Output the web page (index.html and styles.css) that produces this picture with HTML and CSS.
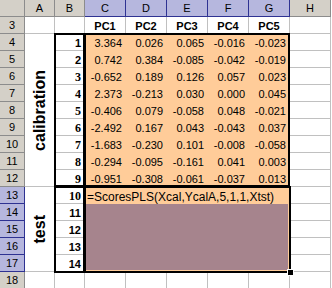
FILE: index.html
```html
<!DOCTYPE html>
<html>
<head>
<meta charset="utf-8">
<link rel="stylesheet" href="styles.css">
</head>
<body>
<div class="wrap">
<div class="sheet">
  <!-- column headers -->
  <div class="hd corner"></div>
  <div class="hd">A</div>
  <div class="hd">B</div>
  <div class="hd hl">C</div>
  <div class="hd hl">D</div>
  <div class="hd hl">E</div>
  <div class="hd hl">F</div>
  <div class="hd hl">G</div>
  <div class="hd">H</div>

  <!-- row 3 -->
  <div class="hd rh">3</div>
  <div class="c"></div>
  <div class="c"></div>
  <div class="c pc">PC1</div>
  <div class="c pc">PC2</div>
  <div class="c pc">PC3</div>
  <div class="c pc">PC4</div>
  <div class="c pc">PC5</div>
  <div class="c"></div>

  <div class="merge m-cal"><span class="vt">calibration</span></div>
  <div class="merge m-test"><span class="vt">test</span></div>
  <div class="formula">=ScoresPLS(Xcal,YcalA,5,1,1,Xtst)</div>
  <div class="selfill"></div>

  <!-- row 4 -->
  <div class="hd rh">4</div>
  <div class="c id">1</div>
  <div class="c n o">3.364</div><div class="c n o">0.026</div><div class="c n o">0.065</div><div class="c n o">-0.016</div><div class="c n o">-0.023</div>
  <div class="c"></div>
  <!-- row 5 -->
  <div class="hd rh">5</div>
  <div class="c id">2</div>
  <div class="c n o">0.742</div><div class="c n o">0.384</div><div class="c n o">-0.085</div><div class="c n o">-0.042</div><div class="c n o">-0.019</div>
  <div class="c"></div>
  <!-- row 6 -->
  <div class="hd rh">6</div>
  <div class="c id sf">3</div>
  <div class="c n o">-0.652</div><div class="c n o">0.189</div><div class="c n o">0.126</div><div class="c n o">0.057</div><div class="c n o">0.023</div>
  <div class="c"></div>
  <!-- row 7 -->
  <div class="hd rh">7</div>
  <div class="c id sf">4</div>
  <div class="c n o">2.373</div><div class="c n o">-0.213</div><div class="c n o">0.030</div><div class="c n o">0.000</div><div class="c n o">0.045</div>
  <div class="c"></div>
  <!-- row 8 -->
  <div class="hd rh">8</div>
  <div class="c id sf">5</div>
  <div class="c n o">-0.406</div><div class="c n o">0.079</div><div class="c n o">-0.058</div><div class="c n o">0.048</div><div class="c n o">-0.021</div>
  <div class="c"></div>
  <!-- row 9 -->
  <div class="hd rh">9</div>
  <div class="c id sf">6</div>
  <div class="c n o">-2.492</div><div class="c n o">0.167</div><div class="c n o">0.043</div><div class="c n o">-0.043</div><div class="c n o">0.037</div>
  <div class="c"></div>
  <!-- row 10 -->
  <div class="hd rh">10</div>
  <div class="c id sf">7</div>
  <div class="c n o">-1.683</div><div class="c n o">-0.230</div><div class="c n o">0.101</div><div class="c n o">-0.008</div><div class="c n o">-0.058</div>
  <div class="c"></div>
  <!-- row 11 -->
  <div class="hd rh">11</div>
  <div class="c id sf">8</div>
  <div class="c n o">-0.294</div><div class="c n o">-0.095</div><div class="c n o">-0.161</div><div class="c n o">0.041</div><div class="c n o">0.003</div>
  <div class="c"></div>
  <!-- row 12 -->
  <div class="hd rh">12</div>
  <div class="c id sf">9</div>
  <div class="c n o">-0.951</div><div class="c n o">-0.308</div><div class="c n o">-0.061</div><div class="c n o">-0.037</div><div class="c n o">0.013</div>
  <div class="c"></div>
  <!-- row 13 -->
  <div class="hd rh hl">13</div>
  <div class="c id sf">10</div>
  <div class="c"></div>
  <!-- row 14 -->
  <div class="hd rh hl">14</div>
  <div class="c id">11</div>
  <div class="c"></div>
  <!-- row 15 -->
  <div class="hd rh hl">15</div>
  <div class="c id">12</div>
  <div class="c"></div>
  <!-- row 16 -->
  <div class="hd rh hl">16</div>
  <div class="c id">13</div>
  <div class="c"></div>
  <!-- row 17 -->
  <div class="hd rh hl">17</div>
  <div class="c id">14</div>
  <div class="c"></div>
  <!-- row 18 -->
  <div class="hd rh">18</div>
  <div class="c"></div><div class="c"></div><div class="c"></div><div class="c"></div><div class="c"></div><div class="c"></div><div class="c"></div><div class="c"></div>
</div>

<div class="overlay">
  <div class="box box-b1"></div>
  <div class="box box-b2"></div>
  <div class="box box-data"></div>
  <div class="box box-sel"><span class="handle"></span></div>
</div>
</div>
</body>
</html>
```

FILE: styles.css
```css
html, body {
  margin: 0;
  padding: 0;
  background: #ffffff;
}

.wrap {
  display: grid;
  height: 288px;
  overflow: hidden;
}

.sheet,
.overlay {
  grid-area: 1 / 1;
  display: grid;
  grid-template-columns: 25px 30px 30px repeat(6, 41px);
  grid-template-rows: repeat(17, 17px);
  align-self: start;
}

.sheet {
  font-family: "Liberation Sans", Arial, sans-serif;
  font-size: 11px;
  color: #000;
}

.overlay {
  pointer-events: none;
  z-index: 2;
}

.sheet > div {
  box-sizing: border-box;
}

.hd {
  background: #d4d0c8;
  border-right: 1px solid #8c8c8c;
  border-bottom: 1px solid #8c8c8c;
  display: flex;
  align-items: center;
  justify-content: center;
  font-size: 11px;
  line-height: 16px;
}

.hd.hl {
  background: #b6b7de;
  border-right-color: #2e3292;
  border-bottom-color: #2e3292;
}

.c {
  background: #fff;
  border-right: 1px solid #c0c0c0;
  border-bottom: 1px solid #c0c0c0;
  line-height: 16px;
  white-space: nowrap;
}

.pc {
  font-weight: bold;
  text-align: center;
  padding-top: 1px;
}

.n {
  text-align: right;
  padding-right: 3px;
  padding-top: 1px;
}

.c.o {
  background: #ffcc99;
  border-color: #ffcc99;
}

.id {
  font-weight: bold;
  text-align: right;
  padding-right: 3px;
  padding-top: 1px;
  font-size: 11px;
}

.id.sf {
  font-family: "Liberation Serif", "Times New Roman", serif;
  font-size: 12px;
}

.merge {
  background: #fff;
  border-right: 1px solid #c0c0c0;
  border-bottom: 1px solid #c0c0c0;
  grid-column: 2;
  display: flex;
  align-items: center;
  justify-content: center;
}

.m-cal { grid-row: 3 / 12; }
.m-test { grid-row: 12 / 17; }

.vt {
  writing-mode: vertical-rl;
  transform: rotate(180deg);
  font-weight: bold;
  font-size: 16px;
  line-height: 18px;
}

.formula {
  grid-column: 4 / 9;
  grid-row: 12;
  background: #ffcc99;
  padding-left: 2px;
  padding-top: 2px;
  font-size: 12px;
  line-height: 16px;
  white-space: nowrap;
}

.selfill {
  grid-column: 4 / 9;
  grid-row: 13 / 17;
  background: #a6848d;
  border-style: solid;
  border-color: #ffcc99;
  border-width: 0 2px 2px 1px;
}

.box {
  box-sizing: border-box;
  border: 2px solid #000;
  margin: -1px 0 0 -1px;
}

.box-b1 { grid-column: 3; grid-row: 3 / 12; }
.box-b2 { grid-column: 3; grid-row: 12 / 17; margin-bottom: -1px; }
.box-data { grid-column: 4 / 9; grid-row: 3 / 12; }
.box-sel {
  grid-column: 4 / 9;
  grid-row: 12 / 17;
  margin: -1px -1px -1px -1px;
  position: relative;
}

.handle {
  position: absolute;
  right: -5px;
  bottom: -5px;
  width: 5px;
  height: 5px;
  background: #000;
  border: 1px solid #fff;
}
```
